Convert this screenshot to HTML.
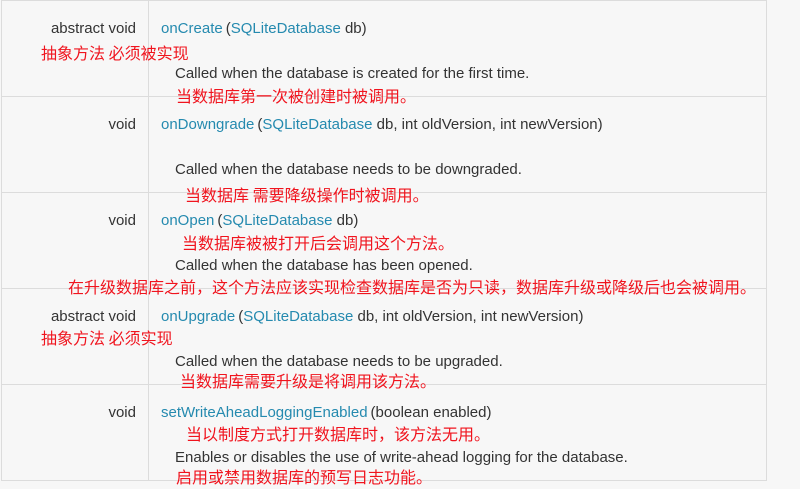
<!DOCTYPE html>
<html><head><meta charset="utf-8"><style>
body{margin:0;width:800px;height:489px;background:#f7f7f7;position:relative;overflow:hidden;font-family:"Liberation Sans","Noto Sans CJK SC",sans-serif;font-size:15px;color:#333}
.l{position:absolute;background:#dcdcdc}
.t{position:absolute;white-space:nowrap;line-height:18px}
.r{text-align:right;width:136px;left:0}
.b{color:#258aaf}
.p{margin-left:3px}
.red{color:#f0141e;font-size:16px;font-family:"Noto Sans CJK SC",sans-serif}
</style></head><body>
<div class="l" style="left:1px;top:0;width:1px;height:481px"></div>
<div class="l" style="left:148px;top:0;width:1px;height:481px"></div>
<div class="l" style="left:766px;top:0;width:1px;height:481px"></div>
<div class="l" style="left:1px;top:0;width:766px;height:1px"></div>
<div class="l" style="left:1px;top:96px;width:766px;height:1px"></div>
<div class="l" style="left:1px;top:192px;width:766px;height:1px"></div>
<div class="l" style="left:1px;top:288px;width:766px;height:1px"></div>
<div class="l" style="left:1px;top:384px;width:766px;height:1px"></div>
<div class="l" style="left:1px;top:480px;width:766px;height:1px"></div>

<div class="t r" style="top:20px">abstract void</div>
<div class="t" style="left:161px;top:20px"><span class="b">onCreate</span><span class="p">(</span><span class="b">SQLiteDatabase</span> db)</div>
<div class="t red" style="left:41px;top:43px">抽象方法 必须被实现</div>
<div class="t" style="left:175px;top:65px">Called when the database is created for the first time.</div>
<div class="t red" style="left:176px;top:86px">当数据库第一次被创建时被调用。</div>

<div class="t r" style="top:116px">void</div>
<div class="t" style="left:161px;top:116px"><span class="b">onDowngrade</span><span class="p">(</span><span class="b">SQLiteDatabase</span> db, int oldVersion, int newVersion)</div>
<div class="t" style="left:175px;top:161px">Called when the database needs to be downgraded.</div>
<div class="t red" style="left:185px;top:185px">当数据库 需要降级操作时被调用。</div>

<div class="t r" style="top:212px">void</div>
<div class="t" style="left:161px;top:212px"><span class="b">onOpen</span><span class="p">(</span><span class="b">SQLiteDatabase</span> db)</div>
<div class="t red" style="left:182px;top:233px">当数据库被被打开后会调用这个方法。</div>
<div class="t" style="left:175px;top:257px">Called when the database has been opened.</div>
<div class="t red" style="left:68px;top:277px">在升级数据库之前，这个方法应该实现检查数据库是否为只读，数据库升级或降级后也会被调用。</div>

<div class="t r" style="top:308px">abstract void</div>
<div class="t" style="left:161px;top:308px"><span class="b">onUpgrade</span><span class="p">(</span><span class="b">SQLiteDatabase</span> db, int oldVersion, int newVersion)</div>
<div class="t red" style="left:41px;top:328px">抽象方法 必须实现</div>
<div class="t" style="left:175px;top:353px">Called when the database needs to be upgraded.</div>
<div class="t red" style="left:180px;top:371px">当数据库需要升级是将调用该方法。</div>

<div class="t r" style="top:404px">void</div>
<div class="t" style="left:161px;top:404px"><span class="b">setWriteAheadLoggingEnabled</span><span class="p">(</span>boolean enabled)</div>
<div class="t red" style="left:186px;top:424px">当以制度方式打开数据库时，该方法无用。</div>
<div class="t" style="left:175px;top:449px">Enables or disables the use of write-ahead logging for the database.</div>
<div class="t red" style="left:176px;top:467px">启用或禁用数据库的预写日志功能。</div>
</body></html>
